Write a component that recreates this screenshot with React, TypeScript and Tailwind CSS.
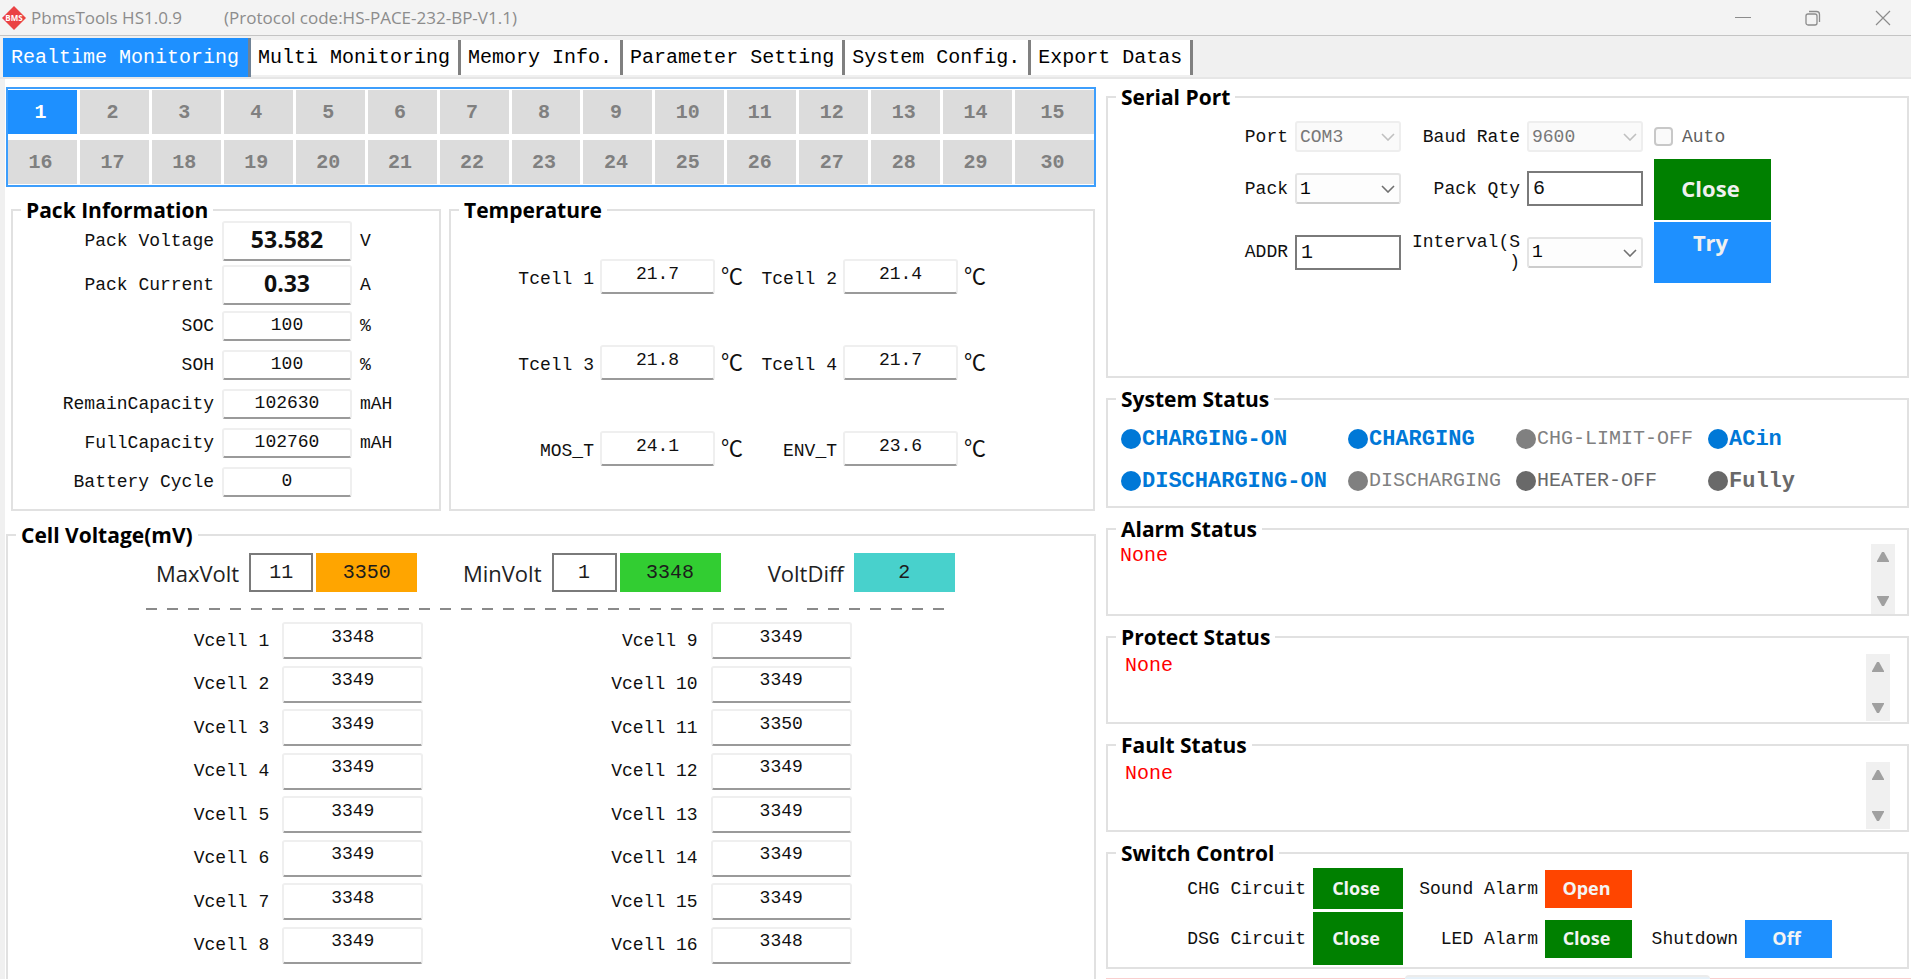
import { useState } from "react";
import type { ReactNode } from "react";

const MONO = "font-['Liberation_Mono','Noto_Sans_CJK_SC',monospace]";
const SANS = "font-['Open_Sans','Noto_Sans',sans-serif]";

const tabs = [
  "Realtime Monitoring",
  "Multi Monitoring",
  "Memory Info.",
  "Parameter Setting",
  "System Config.",
  "Export Datas",
];

const packMain = [
  { label: "Pack Voltage", value: "53.582", unit: "V" },
  { label: "Pack Current", value: "0.33", unit: "A" },
];

const packDetails = [
  { label: "SOC", value: "100", unit: "%" },
  { label: "SOH", value: "100", unit: "%" },
  { label: "RemainCapacity", value: "102630", unit: "mAH" },
  { label: "FullCapacity", value: "102760", unit: "mAH" },
  { label: "Battery Cycle", value: "0", unit: "" },
];

const temperatures = [
  ["Tcell 1", "21.7"],
  ["Tcell 2", "21.4"],
  ["Tcell 3", "21.8"],
  ["Tcell 4", "21.7"],
  ["MOS_T", "24.1"],
  ["ENV_T", "23.6"],
];

const cells = [
  3348, 3349, 3349, 3349, 3349, 3349, 3348, 3349,
  3349, 3349, 3350, 3349, 3349, 3349, 3349, 3348,
];

const statuses = [
  { text: "CHARGING-ON", dot: "bg-[#0078d7]", style: "text-[22px] font-bold text-[#0078d7]" },
  { text: "CHARGING", dot: "bg-[#0078d7]", style: "text-[22px] font-bold text-[#0078d7]" },
  { text: "CHG-LIMIT-OFF", dot: "bg-[#808080]", style: "text-xl text-[#808080]" },
  { text: "ACin", dot: "bg-[#0078d7]", style: "text-[22px] font-bold text-[#0078d7]" },
  { text: "DISCHARGING-ON", dot: "bg-[#0078d7]", style: "text-[22px] font-bold text-[#0078d7]" },
  { text: "DISCHARGING", dot: "bg-[#808080]", style: "text-xl text-[#808080]" },
  { text: "HEATER-OFF", dot: "bg-[#696969]", style: "text-xl text-[#696969]" },
  { text: "Fully", dot: "bg-[#696969]", style: "text-[22px] font-bold text-[#696969]" },
];

function toId(label: string) {
  return label.toLowerCase().replace(/[^a-z0-9]+/g, "-");
}

function Group({ title, className = "", children }: { title: string; className?: string; children: ReactNode }) {
  return (
    <fieldset className={`min-w-0 border-2 border-[#e1e1e1] ${className}`}>
      <legend className={`ml-2 px-[5px] text-[21px] leading-6 font-bold text-black ${SANS}`}>{title}</legend>
      {children}
    </fieldset>
  );
}

function Label({ htmlFor, className = "", children }: { htmlFor: string; className?: string; children: ReactNode }) {
  return (
    <label htmlFor={htmlFor} className={`text-right text-lg leading-5 ${className}`}>
      {children}
    </label>
  );
}

// Flat read-only value box with the darker line underneath
function Value({ id, value, className = "" }: { id: string; value: string; className?: string }) {
  return (
    <input
      id={id}
      readOnly
      value={value}
      className={`w-full min-w-0 rounded-[3px] border-2 border-[#efefef] border-b-[#9a9a9a] bg-white text-center outline-none ${className}`}
    />
  );
}

function Select({ id, value, disabled = false }: { id: string; value: string; disabled?: boolean }) {
  return (
    <div className="relative">
      <select
        id={id}
        disabled={disabled}
        defaultValue={value}
        className="block h-[31px] w-full appearance-none rounded-[3px] border-2 border-[#e4e4e4] border-b-[#cccccc] bg-[#fdfdfd] px-[3px] text-lg leading-5 text-black outline-none disabled:border-[#eeeeee] disabled:bg-[#fafafa] disabled:text-[#787878] disabled:opacity-100"
      >
        <option>{value}</option>
      </select>
      <svg
        viewBox="0 0 14 8"
        className={`pointer-events-none absolute top-3 right-[6px] h-2 w-[14px] fill-none ${disabled ? "stroke-[#c0c0c0]" : "stroke-[#707070]"}`}
        strokeWidth="1.6"
      >
        <path d="M1 1l6 6 6-6" />
      </svg>
    </div>
  );
}

function TitleBar() {
  return (
    <header className={`flex h-9 items-center border-b border-[#c4c4c4] bg-[#f3f3f3] text-[#8c8c8c] ${SANS}`}>
      <svg viewBox="0 0 24 24" className="ml-0.5 size-6">
        <path d="M12 0l12 12-12 12L0 12z" fill="#ea4244" />
        <text x="12" y="15" textAnchor="middle" fontSize="8" fontWeight="700" fill="#fff">
          BMS
        </text>
      </svg>
      <h1 className="ml-[5px] flex gap-[42px] text-[17px]">
        <span>PbmsTools HS1.0.9</span>
        <span>(Protocol code:HS-PACE-232-BP-V1.1)</span>
      </h1>
      <div className="ml-auto flex h-full gap-[14px]">
        <button aria-label="Minimize" className="flex w-14 items-center justify-center">
          <svg viewBox="0 0 16 16" className="size-4 fill-none stroke-[#8c8c8c]">
            <path d="M0 7.5h16" />
          </svg>
        </button>
        <button aria-label="Restore" className="flex w-14 items-center justify-center">
          <svg viewBox="0 0 16 16" className="size-4 fill-none stroke-[#8c8c8c]" strokeWidth="1.3">
            <rect x="1" y="4" width="11" height="11" rx="2" />
            <path d="M4 1.5h7.5a3 3 0 0 1 3 3V12" />
          </svg>
        </button>
        <button aria-label="Close window" className="flex w-14 items-center justify-center">
          <svg viewBox="0 0 16 16" className="size-4 fill-none stroke-[#8c8c8c]" strokeWidth="1.2">
            <path d="M1 1l14 14M15 1L1 15" />
          </svg>
        </button>
      </div>
    </header>
  );
}

function TabBar() {
  const [active, setActive] = useState(0);

  return (
    <nav className="flex h-[43px] items-stretch border-b-2 border-[#e6e6e6] bg-[#f0f0f0] pl-[3px]">
      {tabs.map((tab, i) => (
        <button
          key={tab}
          onClick={() => setActive(i)}
          className={
            i === active
              ? "mt-0.5 border-r-[3px] border-[#6f8296] bg-[#1e90ff] pr-[9px] pl-2 text-xl leading-6 text-white"
              : "mt-1 mb-0.5 border-r-[3px] border-[#808080] bg-white pr-2 pl-[7px] text-xl leading-6 text-black"
          }
        >
          {tab}
        </button>
      ))}
    </nav>
  );
}

function PackSelector() {
  const [pack, setPack] = useState(1);

  return (
    <div className="grid grid-cols-[repeat(14,69fr)_79fr] gap-x-[3px] gap-y-[6px] border-2 border-[#3d9efc] py-px">
      {Array.from({ length: 30 }, (_, i) => i + 1).map((n) => (
        <button
          key={n}
          onClick={() => setPack(n)}
          className={`h-11 pt-0.5 pr-1 text-xl font-bold ${n === pack ? "bg-[#1e90ff] text-white" : "bg-[#dcdcdc] text-[#808080]"}`}
        >
          {n}
        </button>
      ))}
    </div>
  );
}

function PackRow({ label, value, unit, big = false }: { label: string; value: string; unit: string; big?: boolean }) {
  return (
    <div className="grid grid-cols-[201fr_130fr_79fr] items-center gap-x-2">
      <Label htmlFor={toId(label)}>{label}</Label>
      <Value id={toId(label)} value={value} className={big ? `h-10 pb-1 text-[23px] font-bold ${SANS}` : "h-[30px] pb-0.5 text-lg"} />
      <span className="text-lg leading-5">{unit}</span>
    </div>
  );
}

function PackInformation() {
  return (
    <Group title="Pack Information" className="h-[313px]">
      <div className="-mt-px flex flex-col gap-1">
        {packMain.map((row) => (
          <PackRow key={row.label} {...row} big />
        ))}
      </div>
      <div className="mt-[6px] flex flex-col gap-[9px]">
        {packDetails.map((row) => (
          <PackRow key={row.label} {...row} />
        ))}
      </div>
    </Group>
  );
}

function Temperature() {
  return (
    <Group title="Temperature" className="h-[313px]">
      <div className="mt-[37px] grid grid-cols-[143fr_115fr_22fr_88fr_115fr_129fr] items-center gap-x-[6px] gap-y-[51px]">
        {temperatures.map(([label, value]) => (
          <div key={label} className="contents">
            <Label htmlFor={toId(label)} className="pt-1">{label}</Label>
            <Value id={toId(label)} value={value} className="h-[35px] pb-[6px] text-lg" />
            <span className="pt-1 text-[22px] leading-6">℃</span>
          </div>
        ))}
      </div>
    </Group>
  );
}

function VoltBox({ label, value, color }: { label: string; value: string; color: string }) {
  return (
    <input
      aria-label={label}
      readOnly
      value={value}
      className={`h-[39px] w-full min-w-0 text-center text-xl text-[#1c1c1c] outline-none ${color}`}
    />
  );
}

function CellVoltage() {
  const label = `pr-[7px] text-right text-[22px] leading-8 text-[#222222] ${SANS}`;

  return (
    <Group title="Cell Voltage(mV)" className="flex-1 border-b-0">
      <div className="mt-[6px] grid grid-cols-[238fr_64fr_101fr_128fr_65fr_101fr_127fr_101fr_136fr] items-center gap-x-[3px]">
        <span className={label}>MaxVolt</span>
        <VoltBox label="MaxVolt cell" value="11" color="border-2 border-[#7a7a7a] bg-white" />
        <VoltBox label="MaxVolt" value="3350" color="bg-[#ffa500]" />
        <span className={label}>MinVolt</span>
        <VoltBox label="MinVolt cell" value="1" color="border-2 border-[#7a7a7a] bg-white" />
        <VoltBox label="MinVolt" value="3348" color="bg-[#32cd32]" />
        <span className={label}>VoltDiff</span>
        <VoltBox label="VoltDiff" value="2" color="bg-[#48d1cc]" />
      </div>

      <svg className="mt-4 ml-[138px] block h-0.5 w-[800px] stroke-[#8a8a8a]" strokeWidth="2" strokeDasharray="11 10">
        <path d="M0 1h641" />
        <path d="M661 1h137" />
      </svg>

      <div className="mt-3 flex h-[342px] flex-col justify-between">
        {cells.slice(0, 8).map((mv, i) => (
          <div key={i} className="grid grid-cols-[261fr_141fr_261fr_141fr_229fr] items-center gap-x-[13px]">
            <Label htmlFor={`vcell-${i + 1}`}>Vcell {i + 1}</Label>
            <Value id={`vcell-${i + 1}`} value={String(mv)} className="h-[37px] pb-2 text-lg" />
            <Label htmlFor={`vcell-${i + 9}`}>Vcell {i + 9}</Label>
            <Value id={`vcell-${i + 9}`} value={String(cells[i + 8])} className="h-[37px] pb-2 text-lg" />
          </div>
        ))}
      </div>
    </Group>
  );
}

function SerialPort() {
  const box = "h-[35px] w-full min-w-0 border-2 border-[#7a7a7a] bg-white px-1 text-xl outline-none";

  return (
    <Group title="Serial Port" className="h-[293px]">
      <div className="grid grid-cols-[535fr_117fr_125fr] gap-x-[11px]">
        <div className="grid grid-cols-[180fr_106fr_112fr_116fr] grid-rows-[51px_53px_74px] items-center gap-x-[7px] pt-0.5">
          <Label htmlFor="port">Port</Label>
          <Select id="port" value="COM3" disabled />
          <Label htmlFor="baud">Baud Rate</Label>
          <Select id="baud" value="9600" disabled />

          <Label htmlFor="pack">Pack</Label>
          <Select id="pack" value="1" />
          <Label htmlFor="qty">Pack Qty</Label>
          <input id="qty" defaultValue="6" className={box} />

          <Label htmlFor="addr">ADDR</Label>
          <input id="addr" defaultValue="1" className={box} />
          <Label htmlFor="interval" className="[line-break:anywhere]">Interval(S)</Label>
          <Select id="interval" value="1" />
        </div>

        <div className="flex flex-col pt-3">
          <label className="mb-[7px] flex h-[31px] items-center gap-[9px] text-lg text-[#606060]">
            <input type="checkbox" disabled className="size-[19px] appearance-none rounded-[4px] border-2 border-[#c8c8c8] bg-[#fafafa]" />
            Auto
          </label>
          <button className={`h-[61px] bg-[#008000] pr-1 pb-0.5 text-[22px] font-bold text-[#f0f0f0] ${SANS}`}>Close</button>
          <button className={`mt-0.5 h-[61px] bg-[#1e90ff] pr-1 pb-5 text-[22px] font-bold text-[#f0f0f0] ${SANS}`}>Try</button>
        </div>
      </div>
    </Group>
  );
}

function SystemStatus() {
  return (
    <Group title="System Status" className="h-[121px]">
      <ul className="grid grid-cols-[227fr_168fr_192fr_199fr] pt-[7px] pl-[13px]">
        {statuses.map((s) => (
          <li key={s.text} className={`flex h-[42px] items-center whitespace-nowrap ${s.style}`}>
            <span className={`mr-px size-5 shrink-0 rounded-full ${s.dot}`} />
            {s.text}
          </li>
        ))}
      </ul>
    </Group>
  );
}

function MessageGroup({ title, className }: { title: string; className: string }) {
  return (
    <Group title={title} className="h-[99px]">
      <div className={`flex h-[73px] justify-between ${className}`}>
        <p className="text-xl leading-6 text-[#ff0000]">None</p>
        <div className="flex w-6 flex-col items-center justify-between bg-[#f0f0f0] py-2">
          <button aria-label={`${title} up`}>
            <svg viewBox="0 0 14 10" className="block h-[10px] w-[14px] fill-[#a0a0a0]">
              <path d="M6 0h2l5 9v1H1V9z" />
            </svg>
          </button>
          <button aria-label={`${title} down`}>
            <svg viewBox="0 0 14 10" className="block h-[10px] w-[14px] fill-[#a0a0a0]">
              <path d="M1 0h12v1L8 10H6L1 1z" />
            </svg>
          </button>
        </div>
      </div>
    </Group>
  );
}

function SwitchButton({ id, color, children }: { id: string; color: string; children: ReactNode }) {
  return (
    <button id={id} className={`pr-1 pb-0.5 text-lg font-bold text-[#f4f4f4] ${SANS} ${color}`}>
      {children}
    </button>
  );
}

function SwitchControl() {
  return (
    <Group title="Switch Control" className="h-[128px]">
      <div className="grid grid-cols-[198fr_90fr_128fr_87fr_99fr_87fr_68fr] grid-rows-[41px_53px] items-center gap-x-[7px] gap-y-[3px] pt-[3px]">
        <Label htmlFor="chg">CHG Circuit</Label>
        <SwitchButton id="chg" color="h-full bg-[#008000]">Close</SwitchButton>
        <Label htmlFor="sound">Sound Alarm</Label>
        <SwitchButton id="sound" color="h-[38px] bg-[#ff4500]">Open</SwitchButton>

        <Label htmlFor="dsg" className="col-start-1">DSG Circuit</Label>
        <SwitchButton id="dsg" color="h-full bg-[#008000]">Close</SwitchButton>
        <Label htmlFor="led">LED Alarm</Label>
        <SwitchButton id="led" color="h-[38px] bg-[#008000]">Close</SwitchButton>
        <Label htmlFor="shutdown">Shutdown</Label>
        <SwitchButton id="shutdown" color="h-[38px] bg-[#1e90ff]">Off</SwitchButton>
      </div>
    </Group>
  );
}

// Top edge of the message bar that runs past the bottom of the window
function BottomEdge() {
  return (
    <div className="-mt-[3px] -mr-0.5 grid h-1 grid-cols-[299fr_305fr_201fr] items-end">
      <div className="h-px bg-[#f9cfcf]" />
      <div className="h-full rounded-t-lg border-t-2 border-[#ececec] bg-[#e6f0f8]" />
      <div className="h-px bg-[#f9cfcf]" />
    </div>
  );
}

export default function App() {
  return (
    <div className={`flex min-h-screen flex-col bg-white text-[#101010] ${MONO}`}>
      <TitleBar />
      <TabBar />

      <main className="grid flex-1 grid-cols-[1090fr_803fr] gap-x-[10px] border-l-[5px] border-[#f0f0f0] pr-0.5 pl-px">
        <div className="flex flex-col pt-2">
          <PackSelector />
          <div className="mt-[11px] mb-3 grid grid-cols-[430fr_646fr] gap-x-2 pr-px pl-[5px]">
            <PackInformation />
            <Temperature />
          </div>
          <CellVoltage />
        </div>

        <div className="flex flex-col gap-[9px] pt-[6px]">
          <SerialPort />
          <SystemStatus />
          <MessageGroup title="Alarm Status" className="pt-[3px] pr-3 pl-3" />
          <MessageGroup title="Protect Status" className="pt-[5px] pr-[17px] pb-px pl-[17px]" />
          <MessageGroup title="Fault Status" className="pt-[5px] pr-[17px] pb-px pl-[17px]" />
          <SwitchControl />
          <BottomEdge />
        </div>
      </main>
    </div>
  );
}
